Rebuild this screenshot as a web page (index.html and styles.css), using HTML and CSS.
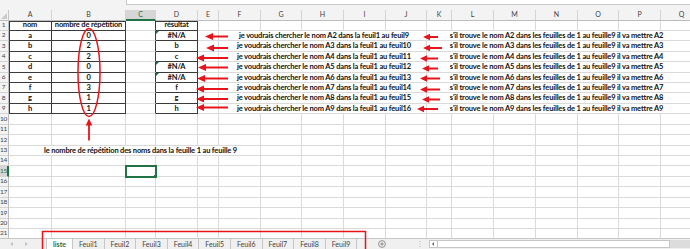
FILE: index.html
```html
<!DOCTYPE html>
<html lang="fr">
<head>
  <meta charset="UTF-8" />
  <title>liste - Excel</title>
  <link rel="stylesheet" href="styles.css">
</head>
<body>
  <div class="formula-strip"><div class="formula-box"></div></div>

  <div class="sheet">
    <div class="grid">
      <div class="row">
        <div class="c corner"></div>
        <div class="c hd">A</div><div class="c hd">B</div><div class="c hd sel">C</div><div class="c hd">D</div>
        <div class="c hd">E</div><div class="c hd">F</div><div class="c hd">G</div><div class="c hd">H</div>
        <div class="c hd">I</div><div class="c hd">J</div><div class="c hd">K</div><div class="c hd">L</div>
        <div class="c hd">M</div><div class="c hd">N</div><div class="c hd">O</div><div class="c hd">P</div>
        <div class="c hd">Q</div>
      </div>

      <div class="row">
        <div class="c rh">1</div>
        <div class="c tb tt tl">nom</div><div class="c tb tt">nombre de répétition</div><div class="c br"></div><div class="c tb tt">résultat</div>
        <div class="c"></div><div class="c"></div><div class="c"></div><div class="c"></div><div class="c"></div><div class="c"></div><div class="c"></div>
        <div class="c"></div><div class="c"></div><div class="c"></div><div class="c"></div><div class="c"></div><div class="c"></div>
      </div>
      <div class="row">
        <div class="c rh">2</div>
        <div class="c tb tl">a</div><div class="c tb">0</div><div class="c br"></div><div class="c tb err">#N/A</div><div class="c"></div>
        <div class="c fj">je voudrais chercher le nom A2 dans la feuil1 au feuil9</div>
        <div class="c kq">s'il trouve le nom A2 dans les feuilles de 1 au feuille9 il va mettre A2</div>
      </div>
      <div class="row">
        <div class="c rh">3</div>
        <div class="c tb tl">b</div><div class="c tb">2</div><div class="c br"></div><div class="c tb">b</div><div class="c"></div>
        <div class="c fj">je voudrais chercher le nom A3 dans la feuil1 au feuil10</div>
        <div class="c kq">s'il trouve le nom A3 dans les feuilles de 1 au feuille9 il va mettre A3</div>
      </div>
      <div class="row">
        <div class="c rh">4</div>
        <div class="c tb tl">c</div><div class="c tb">2</div><div class="c br"></div><div class="c tb">c</div><div class="c"></div>
        <div class="c fj">je voudrais chercher le nom A4 dans la feuil1 au feuil11</div>
        <div class="c kq">s'il trouve le nom A4 dans les feuilles de 1 au feuille9 il va mettre A4</div>
      </div>
      <div class="row">
        <div class="c rh">5</div>
        <div class="c tb tl">d</div><div class="c tb">0</div><div class="c br"></div><div class="c tb err">#N/A</div><div class="c"></div>
        <div class="c fj">je voudrais chercher le nom A5 dans la feuil1 au feuil12</div>
        <div class="c kq">s'il trouve le nom A5 dans les feuilles de 1 au feuille9 il va mettre A5</div>
      </div>
      <div class="row">
        <div class="c rh">6</div>
        <div class="c tb tl">e</div><div class="c tb">0</div><div class="c br"></div><div class="c tb err">#N/A</div><div class="c"></div>
        <div class="c fj">je voudrais chercher le nom A6 dans la feuil1 au feuil13</div>
        <div class="c kq">s'il trouve le nom A6 dans les feuilles de 1 au feuille9 il va mettre A6</div>
      </div>
      <div class="row">
        <div class="c rh">7</div>
        <div class="c tb tl">f</div><div class="c tb">3</div><div class="c br"></div><div class="c tb">f</div><div class="c"></div>
        <div class="c fj">je voudrais chercher le nom A7 dans la feuil1 au feuil14</div>
        <div class="c kq">s'il trouve le nom A7 dans les feuilles de 1 au feuille9 il va mettre A7</div>
      </div>
      <div class="row">
        <div class="c rh">8</div>
        <div class="c tb tl">g</div><div class="c tb">1</div><div class="c br"></div><div class="c tb">g</div><div class="c"></div>
        <div class="c fj">je voudrais chercher le nom A8 dans la feuil1 au feuil15</div>
        <div class="c kq">s'il trouve le nom A8 dans les feuilles de 1 au feuille9 il va mettre A8</div>
      </div>
      <div class="row">
        <div class="c rh">9</div>
        <div class="c tb tl">h</div><div class="c tb">1</div><div class="c br"></div><div class="c tb">h</div><div class="c"></div>
        <div class="c fj">je voudrais chercher le nom A9 dans la feuil1 au feuil16</div>
        <div class="c kq">s'il trouve le nom A9 dans les feuilles de 1 au feuille9 il va mettre A9</div>
      </div>

      <div class="row">
        <div class="c rh">10</div>
        <div class="c"></div><div class="c"></div><div class="c"></div><div class="c"></div><div class="c"></div><div class="c"></div>
        <div class="c"></div><div class="c"></div><div class="c"></div><div class="c"></div><div class="c"></div><div class="c"></div>
        <div class="c"></div><div class="c"></div><div class="c"></div><div class="c"></div><div class="c"></div>
      </div>
      <div class="row">
        <div class="c rh">11</div>
        <div class="c"></div><div class="c"></div><div class="c"></div><div class="c"></div><div class="c"></div><div class="c"></div>
        <div class="c"></div><div class="c"></div><div class="c"></div><div class="c"></div><div class="c"></div><div class="c"></div>
        <div class="c"></div><div class="c"></div><div class="c"></div><div class="c"></div><div class="c"></div>
      </div>
      <div class="row">
        <div class="c rh">12</div>
        <div class="c"></div><div class="c"></div><div class="c"></div><div class="c"></div><div class="c"></div><div class="c"></div>
        <div class="c"></div><div class="c"></div><div class="c"></div><div class="c"></div><div class="c"></div><div class="c"></div>
        <div class="c"></div><div class="c"></div><div class="c"></div><div class="c"></div><div class="c"></div>
      </div>
      <div class="row">
        <div class="c rh">13</div>
        <div class="c af">le nombre de répétition des noms dans la feuille 1 au feuille 9</div>
        <div class="c"></div><div class="c"></div><div class="c"></div><div class="c"></div><div class="c"></div><div class="c"></div>
        <div class="c"></div><div class="c"></div><div class="c"></div><div class="c"></div><div class="c"></div>
      </div>
      <div class="row">
        <div class="c rh">14</div>
        <div class="c"></div><div class="c"></div><div class="c"></div><div class="c"></div><div class="c"></div><div class="c"></div>
        <div class="c"></div><div class="c"></div><div class="c"></div><div class="c"></div><div class="c"></div><div class="c"></div>
        <div class="c"></div><div class="c"></div><div class="c"></div><div class="c"></div><div class="c"></div>
      </div>
      <div class="row">
        <div class="c rh sel">15</div>
        <div class="c"></div><div class="c"></div><div class="c active"></div><div class="c"></div><div class="c"></div><div class="c"></div>
        <div class="c"></div><div class="c"></div><div class="c"></div><div class="c"></div><div class="c"></div><div class="c"></div>
        <div class="c"></div><div class="c"></div><div class="c"></div><div class="c"></div><div class="c"></div>
      </div>
      <div class="row">
        <div class="c rh">16</div>
        <div class="c"></div><div class="c"></div><div class="c"></div><div class="c"></div><div class="c"></div><div class="c"></div>
        <div class="c"></div><div class="c"></div><div class="c"></div><div class="c"></div><div class="c"></div><div class="c"></div>
        <div class="c"></div><div class="c"></div><div class="c"></div><div class="c"></div><div class="c"></div>
      </div>
      <div class="row">
        <div class="c rh">17</div>
        <div class="c"></div><div class="c"></div><div class="c"></div><div class="c"></div><div class="c"></div><div class="c"></div>
        <div class="c"></div><div class="c"></div><div class="c"></div><div class="c"></div><div class="c"></div><div class="c"></div>
        <div class="c"></div><div class="c"></div><div class="c"></div><div class="c"></div><div class="c"></div>
      </div>
      <div class="row">
        <div class="c rh">18</div>
        <div class="c"></div><div class="c"></div><div class="c"></div><div class="c"></div><div class="c"></div><div class="c"></div>
        <div class="c"></div><div class="c"></div><div class="c"></div><div class="c"></div><div class="c"></div><div class="c"></div>
        <div class="c"></div><div class="c"></div><div class="c"></div><div class="c"></div><div class="c"></div>
      </div>
      <div class="row">
        <div class="c rh">19</div>
        <div class="c"></div><div class="c"></div><div class="c"></div><div class="c"></div><div class="c"></div><div class="c"></div>
        <div class="c"></div><div class="c"></div><div class="c"></div><div class="c"></div><div class="c"></div><div class="c"></div>
        <div class="c"></div><div class="c"></div><div class="c"></div><div class="c"></div><div class="c"></div>
      </div>
      <div class="row">
        <div class="c rh">20</div>
        <div class="c"></div><div class="c"></div><div class="c"></div><div class="c"></div><div class="c"></div><div class="c"></div>
        <div class="c"></div><div class="c"></div><div class="c"></div><div class="c"></div><div class="c"></div><div class="c"></div>
        <div class="c"></div><div class="c"></div><div class="c"></div><div class="c"></div><div class="c"></div>
      </div>
      <div class="row">
        <div class="c rh">21</div>
        <div class="c"></div><div class="c"></div><div class="c"></div><div class="c"></div><div class="c"></div><div class="c"></div>
        <div class="c"></div><div class="c"></div><div class="c"></div><div class="c"></div><div class="c"></div><div class="c"></div>
        <div class="c"></div><div class="c"></div><div class="c"></div><div class="c"></div><div class="c"></div>
      </div>
    </div>
  </div>

  <div class="tabbar">
    <div class="tab-nav"><span class="tri-l"></span><span class="tri-r"></span></div>
    <div class="tab on">liste</div>
    <div class="tab">Feuil1</div>
    <div class="tab">Feuil2</div>
    <div class="tab">Feuil3</div>
    <div class="tab">Feuil4</div>
    <div class="tab">Feuil5</div>
    <div class="tab">Feuil6</div>
    <div class="tab">Feuil7</div>
    <div class="tab">Feuil8</div>
    <div class="tab">Feuil9</div>
    <svg class="add" width="8" height="8" viewBox="0 0 8 8" aria-hidden="true">
      <circle cx="4" cy="4" r="3.4" fill="none" stroke="#7a7a7a" stroke-width="0.8"/>
      <path d="M4 2.2V5.8M2.2 4H5.8" stroke="#7a7a7a" stroke-width="0.8"/>
    </svg>
    <svg class="dots" width="2" height="8" viewBox="0 0 2 8" aria-hidden="true">
      <circle cx="1" cy="1.5" r="0.6" fill="#b0b0b0"/>
      <circle cx="1" cy="4" r="0.6" fill="#b0b0b0"/>
      <circle cx="1" cy="6.5" r="0.6" fill="#b0b0b0"/>
    </svg>
    <div class="hscroll">
      <span class="sbtn"><span class="tri-s"></span></span>
      <span class="thumb"></span>
      <span class="track"></span>
    </div>
  </div>

  <!-- annotations drawn on top of the screenshot -->
  <svg class="marks" width="690" height="249" viewBox="0 0 690 249" aria-hidden="true">
    <g fill="#e8141b" stroke="none">
      <path d="M205 36.5 l8 -3.5 v2.6 h15 v1.8 h-15 v2.6z"/>
      <path d="M206 48 l8 -3.5 v2.6 h14 v1.8 h-14 v2.6z"/>
      <path d="M196 58 l8 -3.5 v2.6 h24 v1.8 h-24 v2.6z"/>
      <path d="M198 67.5 l8 -3.5 v2.6 h22 v1.8 h-22 v2.6z"/>
      <path d="M197 78.5 l8 -3.5 v2.6 h23 v1.8 h-23 v2.6z"/>
      <path d="M196 89 l8 -3.5 v2.6 h24 v1.8 h-24 v2.6z"/>
      <path d="M196 99 l8 -3.5 v2.6 h24 v1.8 h-24 v2.6z"/>
      <path d="M196 107.5 l8 -3.5 v2.6 h24 v1.8 h-24 v2.6z"/>

      <path d="M423 37 l7 -3.3 v2.4 h8 v1.8 h-8 v2.4z"/>
      <path d="M423 48 l7 -3.3 v2.4 h12 v1.8 h-12 v2.4z"/>
      <path d="M420 58.5 l7 -3.3 v2.4 h11 v1.8 h-11 v2.4z"/>
      <path d="M422 68.5 l7 -3.3 v2.4 h9 v1.8 h-9 v2.4z"/>
      <path d="M420 78.5 l7 -3.3 v2.4 h13 v1.8 h-13 v2.4z"/>
      <path d="M420 89.5 l7 -3.3 v2.4 h13 v1.8 h-13 v2.4z"/>
      <path d="M422 99.5 l7 -3.3 v2.4 h11 v1.8 h-11 v2.4z"/>
      <path d="M417 109 l7 -3.3 v2.4 h14 v1.8 h-14 v2.4z"/>

      <path d="M89 118.5 l3.3 7 h-2.4 v15 h-1.8 v-15 h-2.4z"/>
    </g>
    <g fill="none" stroke="#e8141b" stroke-width="1.5">
      <ellipse cx="89" cy="72.5" rx="11" ry="44"/>
      <rect x="42.5" y="231.5" width="323" height="30"/>
    </g>
  </svg>
</body>
</html>
```

FILE: styles.css
```css
/* Base */
* {
  box-sizing: border-box;
}
body {
  margin: 0;
  width: 690px;
  height: 249px;
  overflow: hidden;
  position: relative;
  background: #fff;
  color: #000;
  font-family: Lato, "Liberation Sans", sans-serif;
}

/* Formula bar edge */
.formula-strip {
  height: 10px;
  background: #f3f3f3;
}
.formula-box {
  margin-left: 126px;
  height: 5px;
  background: #fff;
  border-left: 1px solid #c8c8c8;
  border-bottom: 1px solid #c8c8c8;
}

/* Sheet grid */
.sheet {
  height: 228px;
  overflow: hidden;
}
.grid {
  display: grid;
  width: 703px;
  grid-template-columns: 9px 43px 74px 30px 42px 21px 42px 41px 42px 42px 41px 25px 42px 42px 42px 41px 42px 42px;
  grid-template-rows: 10.5px;
  grid-auto-rows: 10.43px;
}
.row {
  display: contents;
}
.c {
  position: relative;
  display: flex;
  align-items: center;
  justify-content: center;
  white-space: nowrap;
  border-right: 1px solid #dadada;
  border-bottom: 1px solid #dadada;
  font-size: 7.5px;
  font-weight: bold;
  letter-spacing: -0.16px;
  line-height: 1;
  color: #111;
}

/* Headers */
.corner {
  background: #f3f3f3;
  border-right-color: #c6c6c6;
  border-bottom-color: #bdbdbd;
}
.corner::after {
  content: "";
  position: absolute;
  right: 1px;
  bottom: 1px;
  border-left: 6px solid transparent;
  border-bottom: 6px solid #c9c9c9;
}
.hd {
  background: #f3f3f3;
  color: #444;
  font-weight: normal;
  font-size: 7px;
  letter-spacing: 0;
  border-right-color: #d4d4d4;
  border-bottom-color: #bdbdbd;
}
.hd.sel {
  background: #d6d6d6;
  color: #217346;
  border-bottom: 2px solid #217346;
}
.rh {
  background: #f3f3f3;
  color: #444;
  font-weight: normal;
  font-size: 6.5px;
  letter-spacing: -0.2px;
  padding-right: 1px;
  border-right-color: #bdbdbd;
  border-bottom-color: #d4d4d4;
}
.rh.sel {
  background: #d6d6d6;
  color: #217346;
  padding-right: 0;
  border-right: 2px solid #217346;
}

/* Bordered table cells */
.tb {
  border-right-color: #3a3a3a;
  border-bottom-color: #3a3a3a;
}
.br {
  border-right-color: #3a3a3a;
}
.tt {
  box-shadow: inset 0 1px 0 #3a3a3a;
}
.tl {
  box-shadow: inset 1px 0 0 #3a3a3a;
}
.tt.tl {
  box-shadow: inset 1px 1px 0 #3a3a3a;
}
.err::before {
  content: "";
  position: absolute;
  top: 0;
  left: 0;
  border-top: 3px solid #217346;
  border-right: 3px solid transparent;
}

/* Long text running over several columns */
.fj {
  grid-column: span 5;
  padding-left: 3px;
}
.kq {
  grid-column: span 7;
  padding-right: 16px;
}
.af {
  grid-column: span 6;
  padding-left: 12px;
}

/* Selected cell */
.active {
  outline: 2px solid #217346;
  outline-offset: -1px;
  z-index: 1;
}
.active::after {
  content: "";
  position: absolute;
  right: -2px;
  bottom: -2px;
  width: 3px;
  height: 3px;
  background: #217346;
}

/* Sheet tabs */
.tabbar {
  height: 11px;
  display: flex;
  align-items: stretch;
  background: #f0f0f0;
  border-top: 1px solid #c6c6c6;
  font-size: 7px;
  color: #444;
}
.tab-nav {
  width: 46px;
  display: flex;
  align-items: center;
  gap: 12px;
  padding-left: 10px;
}
.tri-l {
  border-right: 3px solid #c4c4c4;
  border-top: 2.5px solid transparent;
  border-bottom: 2.5px solid transparent;
}
.tri-r {
  border-left: 3px solid #c4c4c4;
  border-top: 2.5px solid transparent;
  border-bottom: 2.5px solid transparent;
}
.tab {
  width: 31.6px;
  display: flex;
  align-items: center;
  justify-content: center;
  border-right: 1px solid #c6c6c6;
}
.tab.on {
  width: 27px;
  background: #fff;
  color: #217346;
  font-weight: bold;
  border-left: 1px solid #c6c6c6;
}
.add {
  align-self: center;
  margin-left: 20.5px;
}
.dots {
  align-self: center;
  margin-left: 33px;
}
.hscroll {
  display: flex;
  align-items: center;
  margin-left: 8px;
  flex: 1;
}
.sbtn {
  width: 9px;
  height: 8px;
  border: 1px solid #c6c6c6;
  background: #fff;
  display: flex;
  align-items: center;
  justify-content: center;
}
.tri-s {
  border-right: 2.5px solid #666;
  border-top: 2px solid transparent;
  border-bottom: 2px solid transparent;
}
.thumb {
  width: 232px;
  height: 8px;
  background: #fff;
  border: 1px solid #c6c6c6;
  border-left: none;
}
.track {
  flex: 1;
  height: 8px;
  background: #dcdcdc;
}

/* Red annotations */
.marks {
  position: absolute;
  left: 0;
  top: 0;
  pointer-events: none;
}
```
